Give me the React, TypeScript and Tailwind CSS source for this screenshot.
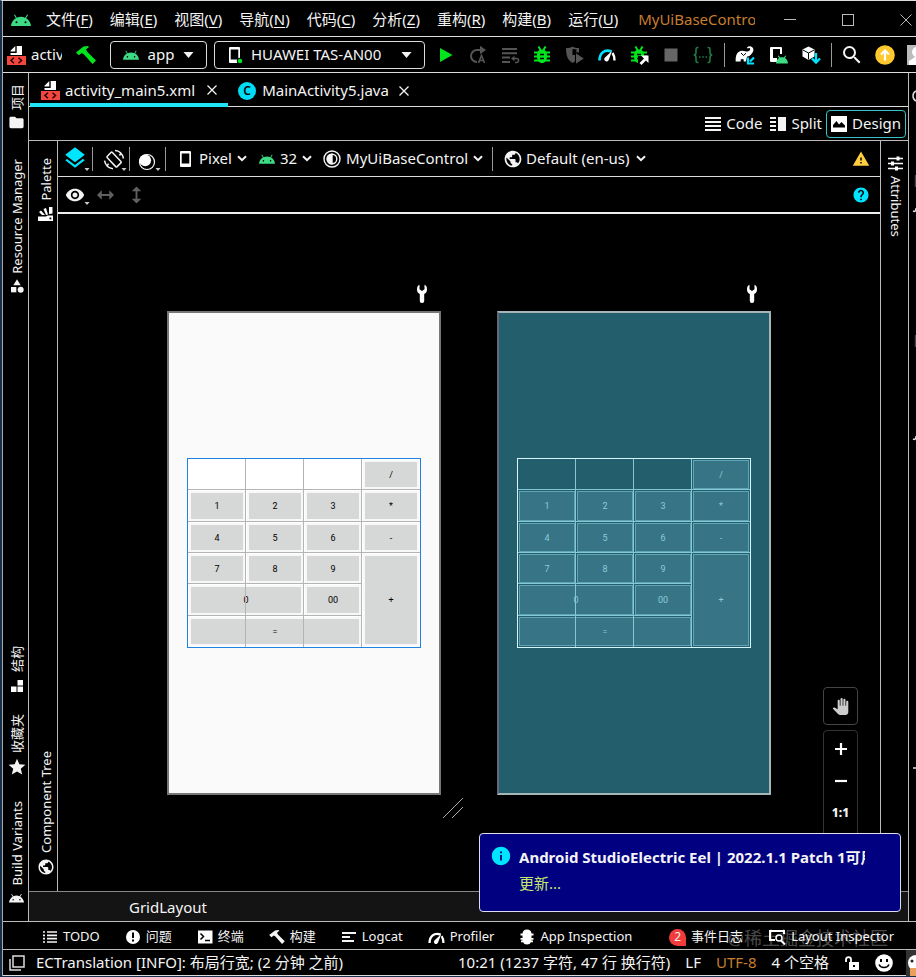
import React from 'react';
import {
  MdCategory,
  MdFolder,
  MdHelp,
  MdInfo,
  MdLayers,
  MdPanTool,
  MdPublic,
  MdSearch,
  MdStar,
  MdVisibility,
  MdWarning,
} from 'react-icons/md';

interface IconProps {
  className?: string;
}

const AndroidHead: React.FC<IconProps> = ({ className }) => (
  <svg viewBox="0 0 20 12" className={className} fill="currentColor" aria-hidden="true">
    <path
      fillRule="evenodd"
      d="M0 12C.3 8.600 2.200 5.700 4.900 4.200L3 1l.9-.5 1.900 3.200a10.500 10.500 0 0 1 8.400 0L16.100.5 17 1l-1.900 3.200C17.800 5.700 19.700 8.600 20 12zM5.500 9.300a1 1 0 1 0 0-2 1 1 0 0 0 0 2zm9 0a1 1 0 1 0 0-2 1 1 0 0 0 0 2z"
    />
  </svg>
);

const XmlFileIcon: React.FC<IconProps> = ({ className }) => (
  <svg viewBox="0 0 20 20" className={className} aria-hidden="true">
    <path d="M8.300 1v5.500H3.500V5.800zM9.700 1H15v9H3.500V8h6.200z" fill="#fff" />
    <path d="M0 11h19v9H0z" fill="#f4453f" />
    <path d="m7 12.800-3 2.700 3 2.700m4.500-5.400 3 2.700-3 2.700" fill="none" stroke="#200" strokeWidth="1.500" />
  </svg>
);

const Hammer: React.FC<IconProps> = ({ className }) => (
  <svg viewBox="0 0 20 18" className={className} fill="currentColor" aria-hidden="true">
    <path d="M0 6.500 7.500.5 12 0l1 1-3 2.500 1.200 2.200L20 14.500 16.500 18 8 8.500 5.800 7 2.800 9.200z" />
  </svg>
);

const PhoneIcon: React.FC<IconProps & { online?: boolean }> = ({ className, online }) => (
  <svg viewBox="0 0 16 18" className={className} aria-hidden="true">
    <path fillRule="evenodd" d="M3 1h9a1 1 0 0 1 1 1v14a1 1 0 0 1-1 1H3a1 1 0 0 1-1-1V2a1 1 0 0 1 1-1zm.700 2.500v10h7.600v-10z" fill="#fff" />
    {online && <circle cx="13" cy="15" r="2.800" fill="#00e51d" stroke="#000" />}
  </svg>
);

const Caret: React.FC<IconProps> = ({ className }) => (
  <svg viewBox="0 0 10 6" className={className} fill="currentColor" aria-hidden="true">
    <path d="M0 0h10L5 6z" />
  </svg>
);

const Chevron = () => (
  <svg viewBox="0 0 10 7" className="h-[7px] w-[10px] shrink-0" fill="none" stroke="currentColor" strokeWidth="2" aria-hidden="true">
    <path d="m1 1.200 4 4 4-4" />
  </svg>
);

const Close = () => (
  <svg viewBox="0 0 10 10" className="size-[10px]" stroke="currentColor" strokeWidth="1.300" aria-hidden="true">
    <path d="m.5.5 9 9m0-9-9 9" />
  </svg>
);

const PlayIcon = () => (
  <svg viewBox="0 0 20 20" className="size-5" aria-hidden="true">
    <path d="M4 3v14l12.500-7z" fill="#00e51d" />
  </svg>
);

const RerunIcon = () => (
  <svg viewBox="0 0 20 20" className="size-5 text-[#555]" fill="none" stroke="currentColor" strokeWidth="2" aria-hidden="true">
    <path d="M9 17a6 6 0 0 1 0-12h4" />
    <path d="M12 .8 18 5l-6 4.200z" fill="currentColor" stroke="none" />
    <path d="m10.500 18 3-7.500 3 7.500m-5-2.500h4" strokeWidth="1.600" />
  </svg>
);

const ApplyChangesIcon = () => (
  <svg viewBox="0 0 20 20" className="size-5 text-[#555]" fill="none" stroke="currentColor" strokeWidth="2" aria-hidden="true">
    <path d="M2 4h15M2 8.300h15M2 12.600h8M2 17h8" />
    <path d="M13 13.500h3.500a2 2 0 0 1 0 4H15" strokeWidth="1.500" />
    <path d="m11 13.500 3.500-2.700v5.400z" fill="currentColor" stroke="none" />
  </svg>
);

const BugIcon: React.FC<{ attach?: boolean }> = ({ attach }) => (
  <svg viewBox="0 0 20 20" className="size-5 text-[#00e51d]" fill="none" stroke="currentColor" strokeWidth="2" aria-hidden="true">
    <path d="M10 4.500c3.500 0 5 2.500 5 6.500 0 4.500-2 7-5 7s-5-2.500-5-7c0-4 1.500-6.500 5-6.500z" fill="currentColor" stroke="none" />
    <path d="M6.500 1.500 8.500 5m5-3.500-2 3.500M2 7.500h16M2 11.500h16M2 15.500h16" />
    <path d="M8 9.500h4M8 13.500h4" stroke="#000" strokeWidth="1.500" />
    {attach && (
      <>
        <path d="M9 11h11v9H9z" fill="#000" stroke="none" />
        <path d="M12 10.500h7.500V18l-2.600-2.600L12.500 20l-2-2 4.500-4.600z" fill="#fff" stroke="none" />
      </>
    )}
  </svg>
);

const CoverageIcon = () => (
  <svg viewBox="0 0 20 20" className="size-5 text-[#555]" aria-hidden="true">
    <path fillRule="evenodd" d="M1 3c3 0 5-.5 6.500-1.500C9 2.500 11 3 14 3v5l-3-2v9L8 18c-4.500-2-7-6-7-15zm6.500 1v6h4V4.500z" fill="currentColor" />
    <path d="M10.500 7.500v12l9-6z" fill="currentColor" stroke="#000" />
  </svg>
);

const GaugeIcon: React.FC<IconProps & { tint?: string }> = ({ className, tint = '#00e5ff' }) => (
  <svg viewBox="0 0 18 14" className={className} fill="none" aria-hidden="true">
    <path d="M1.500 13c0-7 5-12 12-9" stroke={tint} strokeWidth="2.600" />
    <path d="M14.500 5.500c1.300 1.800 2 4.500 2 7.500" stroke="#fff" strokeWidth="2.400" />
    <path d="M14 3.500 7 10a2.300 2.300 0 1 0 3.700 2.500z" fill="#fff" />
  </svg>
);

const StopIcon = () => (
  <svg viewBox="0 0 20 20" className="size-5" aria-hidden="true">
    <path d="M3.500 3.500h13v13h-13z" fill="#666" />
  </svg>
);

const BracesIcon = () => (
  <svg viewBox="0 0 20 20" className="size-5 text-[#1f7a45]" fill="none" stroke="currentColor" strokeWidth="1.600" aria-hidden="true">
    <path d="M5.500 2.500H4.500C3 2.500 3 3.500 3 5v2.500C3 9 2.500 9.800.8 10 2.500 10.200 3 11 3 12.500V15c0 1.500 0 2.500 1.500 2.500h1M14.500 2.500h1C17 2.500 17 3.500 17 5v2.500c0 1.500.5 2.300 2.200 2.500-1.700.2-2.200 1-2.200 2.500V15c0 1.500 0 2.500-1.500 2.500h-1" />
    <path d="M6 12h1.500m1.700 0h1.600m1.700 0H14" />
  </svg>
);

const GradleIcon = () => (
  <svg viewBox="0 0 20 20" className="size-5" aria-hidden="true">
    <path d="M.7 16.500C.3 10 2.500 6 7 5.700c2.500-.2 3.800.9 5.300.8 2-.1 3.700-1.800 2.500-3.200-.6-.7-1.600-.3-2 .3l-1-.8C13 .8 15.800.7 17.300 2.300c2.700 2.900-.1 6.400-2.300 8.200-1 .8-2 1-3 1l-1 5H8.700v-2c-.9-.8-2.100-.8-3 0v2z" fill="#fff" />
    <path d="m6 8 2.500 2.500L11 8.200" fill="none" stroke="#000" />
    <path d="m19 12.500-4 4m-2-4v6h6" fill="none" stroke="#00e5ff" strokeWidth="2.200" />
  </svg>
);

const AvdIcon = () => (
  <svg viewBox="0 0 20 20" className="size-5" aria-hidden="true">
    <path fillRule="evenodd" d="M3 2h10a1 1 0 0 1 1 1v6h-2V4H5v9h4v4H3a1 1 0 0 1-1-1V3a1 1 0 0 1 1-1z" fill="#fff" />
    <path d="M8 18.500c.2-2.500 1.200-4.400 3-5.400L9.800 11l1-.5 1.200 2c1.200-.4 2.800-.4 4 0l1.200-2 1 .5-1.200 2.100c1.700 1 2.800 3 3 5.400z" fill="#3ddc84" />
  </svg>
);

const SdkIcon = () => (
  <svg viewBox="0 0 20 20" className="size-5" aria-hidden="true">
    <path d="M1.500 4.500 7.500 1.500l6 3v7l-6 3.500-6-3.500z" fill="#fff" />
    <path d="m2 5 5.500 3L13 5M7.500 8v6.500" stroke="#000" fill="none" />
    <path d="M15 8v9m-4-3.500 4 4 4-4" stroke="#00e5ff" strokeWidth="2.300" fill="none" />
  </svg>
);

const UpdateIcon = () => (
  <svg viewBox="0 0 20 20" className="size-5" aria-hidden="true">
    <circle cx="10" cy="10" r="9.800" fill="#ffc92e" />
    <path d="M10 15.500V6.500M6 9.500l4-4 4 4" stroke="#fff" strokeWidth="2.200" fill="none" />
  </svg>
);

const RotateIcon = () => (
  <svg viewBox="0 0 22 22" className="size-[22px]" fill="none" stroke="currentColor" strokeWidth="1.500" aria-hidden="true">
    <path d="M4.300 7.200 8 3.500a1 1 0 0 1 1.400 0l8.500 9a1 1 0 0 1 0 1.400l-3.800 3.700a1 1 0 0 1-1.400 0L4.300 8.700a1 1 0 0 1 0-1.500z" />
    <path d="M12 1.500c4.500.3 7.500 3.500 8.500 8M18 4l-1.500 2.500M10 19.700c-4.500-.3-7.500-3.500-8.500-8M4 17.200l1.500-2.500" />
  </svg>
);

const MoonIcon = () => (
  <svg viewBox="0 0 18 18" className="size-[18px]" aria-hidden="true">
    <circle cx="9" cy="9" r="7.500" fill="none" stroke="#fff" strokeWidth="1.200" />
    <circle cx="7.200" cy="7.300" r="5.900" fill="#fff" />
  </svg>
);

const ThemeIcon = () => (
  <svg viewBox="0 0 18 18" className="size-[18px] shrink-0" fill="none" stroke="currentColor" strokeWidth="1.400" aria-hidden="true">
    <circle cx="9" cy="9" r="8" />
    <circle cx="9" cy="9" r="4.800" />
    <path d="M9 4.200a4.800 4.800 0 0 0 0 9.600z" fill="currentColor" />
  </svg>
);

const PanArrow: React.FC<IconProps> = ({ className }) => (
  <svg viewBox="0 0 18 10" className={className} fill="#606060" aria-hidden="true">
    <path d="M0 5 5 0v4h8V0l5 5-5 5V6H5v4z" />
  </svg>
);

const PaletteIcon = () => (
  <svg viewBox="0 0 16 14" className="h-[14px] w-4" fill="#fff" aria-hidden="true">
    <path d="M0 9.500h8l1.500-1L15 8.500V14H0zM1 5l2-1.500 4 4.500H4zM5.500 2 8 1l2 6.500-2 .5zM11 0h3.500v6.500L11 7z" />
    <path d="M11.500 10.500h1.800v1.800h-1.800z" fill="#000" />
  </svg>
);

const WrenchIcon = () => (
  <svg viewBox="0 0 12 19" className="h-[19px] w-3" fill="#fff" aria-hidden="true">
    <path d="M3.500.8v4.500L6 7l2.500-1.700V.8C10.500 1.500 11 3.500 11 5.500c0 2.300-1 3.700-2.800 4.500V17a2 2 0 0 1-2 2h-.4a2 2 0 0 1-2-2v-7C2 9.200 1 7.800 1 5.500c0-2 .5-4 2.500-4.700z" />
  </svg>
);

const TuneIcon = () => (
  <svg viewBox="0 0 15 15" className="size-[15px]" stroke="#fff" strokeWidth="1.500" aria-hidden="true">
    <path d="M0 2.500h15M0 7.500h15M0 12.500h15" />
    <path d="M10 .5v4M4.500 5.500v4m4 1v4" strokeWidth="3" />
  </svg>
);

const StructureIcon = () => (
  <svg viewBox="0 0 12 12" className="size-3" fill="#fff" aria-hidden="true">
    <path d="M6.500 0H12v5.500H6.500zM0 6.500h5.500V12H0zM6.500 6.500H12V12H6.500z" />
  </svg>
);

const ListIcon = () => (
  <svg viewBox="0 0 16 16" className="size-4" stroke="currentColor" strokeWidth="1.700" aria-hidden="true">
    <path d="M1 3h2M5 3h10M1 6.300h2m2 0h10M1 9.600h2m2 0h10M1 13h2m2 0h10" />
  </svg>
);

const ProblemIcon = () => (
  <svg viewBox="0 0 16 16" className="size-4" aria-hidden="true">
    <circle cx="8" cy="8" r="7" fill="#fff" />
    <path d="M7 3.500h2V9H7zm0 7h2v2H7z" fill="#000" />
  </svg>
);

const TerminalIcon = () => (
  <svg viewBox="0 0 16 16" className="size-4" fill="none" stroke="#000" strokeWidth="1.500" aria-hidden="true">
    <path d="M1 1.500h14.500v13H1z" fill="#fff" stroke="none" />
    <path d="m3.500 4.500 3 3-3 3M8 11.500h5" />
  </svg>
);

const LogcatIcon = () => (
  <svg viewBox="0 0 16 16" className="size-4" stroke="currentColor" strokeWidth="2" aria-hidden="true">
    <path d="M1 4h14M1 8h8M1 12h12" />
  </svg>
);

const InspectionIcon = () => (
  <svg viewBox="0 0 16 16" className="size-4" fill="#fff" aria-hidden="true">
    <path d="M3.500 5c0-3 1.500-4.500 4.500-4.500s4.500 1.500 4.500 4.500zM1.500 4.500h13v2h-13zM3.500 6.500h9V9h2v1.700h-2v.8h1.500v1.700h-2.200c-.5 1.300-1.900 2.300-3.800 2.300s-3.300-1-3.800-2.300H2v-1.700h1.500v-.8h-2V9h2z" />
  </svg>
);

const LayoutInspectorIcon = () => (
  <svg viewBox="0 0 18 16" className="h-4 w-[18px]" fill="none" stroke="#fff" strokeWidth="2" aria-hidden="true">
    <path d="M7 11H2V2h14v3" />
    <circle cx="11" cy="9" r="3" strokeWidth="1.500" />
    <path d="m13 11.500 4 4" />
  </svg>
);

const UnlockIcon = () => (
  <svg viewBox="0 0 16 16" className="size-4" aria-hidden="true">
    <path d="M5 7h10v8H5z" fill="#fff" />
    <path d="M2 7V4.500C2 1.300 7 1.300 7 4.500V8" fill="none" stroke="#fff" strokeWidth="1.800" />
    <path d="M9 10h2v2H9z" fill="#000" />
  </svg>
);

const SmileIcon = () => (
  <svg viewBox="0 0 18 18" className="size-[18px]" aria-hidden="true">
    <circle cx="9" cy="9" r="8.800" fill="#fff" />
    <path d="M5 5h2v3H5zm6 0h2v3h-2z" fill="#000" />
    <path d="M4 10.500c1.500 4 8.500 4 10 0" fill="none" stroke="#000" strokeWidth="1.500" />
  </svg>
);

const CodeIcon = () => (
  <svg viewBox="0 0 16 14" className="h-[14px] w-4" stroke="currentColor" strokeWidth="2" aria-hidden="true">
    <path d="M0 1h16M0 5h16M0 9h16M0 13h16" />
  </svg>
);

const SplitIcon = () => (
  <svg viewBox="0 0 16 14" className="h-[14px] w-4" stroke="currentColor" strokeWidth="2" aria-hidden="true">
    <path d="M0 1h6M0 5h6M0 9h6M0 13h6" />
    <path d="M8 0h8v14H8z" fill="currentColor" stroke="none" />
  </svg>
);

const DesignIcon = () => (
  <svg viewBox="0 0 16 16" className="size-4" aria-hidden="true">
    <path d="M0 0h16v16H0z" fill="#fff" />
    <path d="M2 11.500V9l3.500-4 2.500 3.500L10.500 6 14 9.500v2z" fill="#000" />
  </svg>
);

const menus = [
  ['文件', 'F'],
  ['编辑', 'E'],
  ['视图', 'V'],
  ['导航', 'N'],
  ['代码', 'C'],
  ['分析', 'Z'],
  ['重构', 'R'],
  ['构建', 'B'],
  ['运行', 'U'],
];

const MenuBar = () => (
  <header className="flex h-9 items-center border-b border-[#ddd] pt-[2px] pl-2 text-[15px]">
    <AndroidHead className="h-3 w-5 shrink-0 text-[#3ddc84]" />
    <nav className="ml-[15px] flex gap-[17px]">
      {menus.map(([label, key]) => (
        <button key={key} className="whitespace-nowrap">
          {label}(<span className="underline underline-offset-2">{key}</span>)
        </button>
      ))}
    </nav>
    <div className="ml-5 w-[117px] overflow-hidden whitespace-nowrap text-[#c87d2f]">MyUiBaseControl</div>
    <div className="mr-1 ml-auto flex shrink-0 items-center gap-[46px] text-[#bbb]">
      <button aria-label="Minimize" className="w-3 border-t border-current" />
      <button aria-label="Maximize" className="size-3 border border-current" />
      <button aria-label="Close">
        <svg viewBox="0 0 12 12" className="size-3" stroke="currentColor">
          <path d="m.5.5 11 11m0-11-11 11" />
        </svg>
      </button>
    </div>
  </header>
);

const runActions = [
  { label: 'Run', icon: <PlayIcon /> },
  { label: 'Apply changes and restart', icon: <RerunIcon /> },
  { label: 'Apply code changes', icon: <ApplyChangesIcon /> },
  { label: 'Debug', icon: <BugIcon /> },
  { label: 'Coverage', icon: <CoverageIcon /> },
  { label: 'Profile', icon: <GaugeIcon className="h-[15px] w-[18px]" /> },
  { label: 'Attach debugger', icon: <BugIcon attach /> },
  { label: 'Stop', icon: <StopIcon /> },
  { label: 'Format', icon: <BracesIcon /> },
];

const RunToolbar = () => (
  <div className="flex h-9 items-center border-b border-[#ddd] pl-1 text-[15px]">
    <XmlFileIcon className="size-5 shrink-0" />
    <span className="ml-1 w-[31px] shrink-0 overflow-hidden">activity</span>
    <button aria-label="Build" className="ml-[14px] shrink-0">
      <Hammer className="h-[18px] w-5 text-[#00e51d]" />
    </button>
    <div className="ml-[14px] flex h-7 w-[97px] shrink-0 items-center justify-between rounded border border-[#ddd] px-3">
      <AndroidHead className="h-[10px] w-4 text-[#3ddc84]" />
      <select aria-label="Run configuration" className="appearance-none">
        <option>app</option>
      </select>
      <Caret className="h-[6px] w-[11px]" />
    </div>
    <div className="ml-[7px] flex h-7 w-[211px] shrink-0 items-center rounded border border-[#ddd] px-3">
      <PhoneIcon online className="mr-2 h-[18px] w-4 shrink-0" />
      <select aria-label="Device" className="appearance-none">
        <option>HUAWEI TAS-AN00</option>
      </select>
      <Caret className="ml-auto h-[6px] w-[11px]" />
    </div>
    <div className="mx-[11px] flex flex-1 items-center justify-between">
      {runActions.map((action) => (
        <button key={action.label} aria-label={action.label} className="flex w-5 shrink-0 justify-center">
          {action.icon}
        </button>
      ))}
    </div>
    <div className="flex h-6 shrink-0 items-center gap-[13px] border-x border-[#999] px-[10px]">
      <button aria-label="Sync project"><GradleIcon /></button>
      <button aria-label="Device manager"><AvdIcon /></button>
      <button aria-label="SDK manager"><SdkIcon /></button>
    </div>
    <button aria-label="Search" className="ml-2 shrink-0"><MdSearch className="size-6" /></button>
    <button aria-label="Update" className="ml-[11px] shrink-0"><UpdateIcon /></button>
    <button aria-label="Account" className="ml-3 h-5 w-[9px] shrink-0 overflow-hidden bg-[#bbb]">
      <svg viewBox="0 0 9 20" className="h-5 w-[9px]" fill="#fff">
        <circle cx="10" cy="7" r="5" />
        <path d="M2 20v-4l6-4h1v8z" />
      </svg>
    </button>
  </div>
);

interface StripeProps {
  label: string;
  icon: React.ReactNode;
  className?: string;
}

/* Button of a left-hand tool stripe, read from bottom to top */
const StripeButton: React.FC<StripeProps> = ({ label, icon, className = 'gap-1' }) => (
  <button className={`flex flex-col items-center text-[13px] leading-5 ${className}`}>
    <span className="rotate-180 whitespace-nowrap [text-orientation:sideways] [writing-mode:vertical-rl]">{label}</span>
    {icon}
  </button>
);

const EditorTabs = () => (
  <div role="tablist" className="flex h-[34px] border-b border-[#ddd] text-[15px]">
    <div role="tab" aria-selected="true" className="-mb-px ml-px flex items-center gap-1 border-b-4 border-[#1fe4f5] px-[11px] pt-1">
      <XmlFileIcon className="size-5" />
      <button>activity_main5.xml</button>
      <button aria-label="Close activity_main5.xml" className="ml-2"><Close /></button>
    </div>
    <div role="tab" aria-selected="false" className="flex items-center gap-[6px] px-[10px] pt-[2px]">
      <span className="flex size-[18px] items-center justify-center rounded-full bg-[#00dcf5] text-xs font-semibold text-black">C</span>
      <button>MainActivity5.java</button>
      <button aria-label="Close MainActivity5.java" className="ml-1"><Close /></button>
    </div>
  </div>
);

const ViewModes = () => (
  <div className="flex h-[34px] items-center justify-end border-b border-[#bbb] pr-[2px] text-[15px]">
    <button className="flex items-center gap-[5px]"><CodeIcon />Code</button>
    <button className="ml-2 flex items-center gap-[5px]"><SplitIcon />Split</button>
    <button aria-pressed="true" className="ml-1 flex h-7 items-center gap-[5px] rounded border border-[#35c5c9] px-1">
      <DesignIcon />Design
    </button>
  </div>
);

const SurfaceToolbar = () => (
  <div className="flex h-9 items-center border-b border-[#ddd] pl-1 text-[15px]">
    <button aria-label="Design surface" className="flex h-6 w-[31px] items-end border-r border-[#999]">
      <MdLayers className="size-[26px] shrink-0 text-[#00e5ff]" />
      <Caret className="-ml-1 h-[3px] w-[6px] shrink-0 text-[#ccc]" />
    </button>
    <button aria-label="Orientation" className="flex h-6 w-[37px] items-end justify-center border-r border-[#999] pl-2">
      <RotateIcon />
      <Caret className="-ml-1 h-[3px] w-[6px] text-[#ccc]" />
    </button>
    <button aria-label="Night mode" className="flex h-6 w-9 items-end justify-center border-r border-[#999] pl-1">
      <MoonIcon />
      <Caret className="-ml-px h-[3px] w-[6px] text-[#ccc]" />
    </button>
    <button className="ml-3 flex items-center gap-[5px]"><PhoneIcon className="h-[18px] w-4" />Pixel<Chevron /></button>
    <button className="ml-3 flex items-center gap-[5px]"><AndroidHead className="h-[10px] w-4 text-[#3ddc84]" />32<Chevron /></button>
    <button className="ml-[11px] flex items-center gap-[5px]"><ThemeIcon />MyUiBaseControl<Chevron /></button>
    <div className="mr-[10px] ml-[9px] h-6 w-px bg-[#999]" />
    <button className="flex items-center gap-[3px]"><MdPublic className="size-5" />Default (en-us)<span className="ml-[3px]"><Chevron /></span></button>
    <button aria-label="Warnings" className="mr-[10px] ml-auto"><MdWarning className="size-[18px] text-[#ffcf40]" /></button>
  </div>
);

const ViewToolbar = () => (
  <div className="flex h-[37px] items-center border-b-2 border-[#eee] pl-[7px]">
    <button aria-label="View options" className="flex items-end">
      <MdVisibility className="size-5" />
      <Caret className="-ml-px h-[3px] w-[6px] text-[#ccc]" />
    </button>
    <PanArrow className="ml-[7px] h-[10px] w-[17px]" />
    <PanArrow className="ml-[14px] h-[10px] w-[17px] rotate-90" />
    <button aria-label="Help" className="mr-[10px] ml-auto"><MdHelp className="size-[18px] text-[#00e5ff]" /></button>
  </div>
);

interface Key {
  text: string;
  place: string;
}

const keys: Key[] = [
  { text: '/', place: 'col-start-4' },
  { text: '1', place: 'row-start-2' },
  { text: '2', place: 'row-start-2' },
  { text: '3', place: 'row-start-2' },
  { text: '*', place: 'row-start-2' },
  { text: '4', place: 'row-start-3' },
  { text: '5', place: 'row-start-3' },
  { text: '6', place: 'row-start-3' },
  { text: '-', place: 'row-start-3' },
  { text: '7', place: 'row-start-4' },
  { text: '8', place: 'row-start-4' },
  { text: '9', place: 'row-start-4' },
  { text: '+', place: 'col-start-4 row-start-4 row-span-3' },
  { text: '0', place: 'row-start-5 col-span-2' },
  { text: '00', place: 'row-start-5' },
  { text: '=', place: 'row-start-6 col-span-3' },
];

const Calculator: React.FC<{ blueprint?: boolean }> = ({ blueprint }) => {
  const frame = blueprint ? 'border-[#d5f6fa]' : 'border-[#1e82e0] bg-white';
  const key = blueprint
    ? 'border border-[#5fa5b5] bg-[#377586] text-[#8ccbd8]'
    : 'border-2 border-[#f8f8f8] bg-[#d6d7d7] text-black';
  const guide = blueprint ? 'border-[#84c8d6]' : 'border-[#b4b4b4]';
  return (
    <div className={`relative h-[190px] border ${frame}`}>
      <div className="grid h-full grid-cols-4 grid-rows-6 font-['Roboto',sans-serif] text-[9px]">
        {keys.map(({ text, place }) => (
          <button key={text} className={`m-px flex items-center justify-center pt-[2px] ${key} ${place}`}>{text}</button>
        ))}
      </div>
      <div className="pointer-events-none absolute inset-0 grid grid-cols-4 grid-rows-6">
        {Array.from({ length: 24 }, (_, i) => {
          const right = i % 4 < 3 ? 'border-r' : '';
          const bottom = i < 20 && i !== 15 && i !== 19 ? 'border-b' : '';
          return <span key={i} className={`${guide} ${right} ${bottom}`} />;
        })}
      </div>
    </div>
  );
};

const Preview: React.FC<{ blueprint?: boolean }> = ({ blueprint }) => (
  <div className="flex w-[274px] flex-col gap-2">
    <button aria-label="Preview warnings" className="mr-[13px] self-end"><WrenchIcon /></button>
    <div
      className={`flex h-[484px] flex-col justify-center border-2 px-[18px] ${
        blueprint ? 'border-[#a5b5b8] border-l-[#667] bg-[#235e6c]' : 'border-[#777] bg-[#fafafa]'
      }`}
    >
      <Calculator blueprint={blueprint} />
    </div>
  </div>
);

const Canvas = () => (
  <main className="relative flex-1">
    <div className="flex justify-center gap-14 pt-[70px]">
      <Preview />
      <Preview blueprint />
    </div>
    <svg viewBox="0 0 22 22" className="absolute top-[583px] left-[384px] size-[22px]" stroke="#aaa" aria-hidden="true">
      <path d="M1 21 21 1M10 21 21 10" />
    </svg>
    <div className="absolute right-[22px] bottom-0 flex flex-col gap-[5px]">
      <button aria-label="Pan" className="flex h-[38px] w-[35px] items-center justify-center rounded border border-[#444]">
        <MdPanTool className="size-[17px] text-[#ccc]" />
      </button>
      <div className="flex h-[161px] flex-col items-center rounded border border-[#333] pt-[2px]">
        <button aria-label="Zoom in" className="flex size-8 items-center justify-center">
          <svg viewBox="0 0 12 12" className="size-3" stroke="#fff" strokeWidth="2.200"><path d="M0 6h12M6 0v12" /></svg>
        </button>
        <button aria-label="Zoom out" className="flex size-8 items-center justify-center">
          <svg viewBox="0 0 12 12" className="size-3" stroke="#fff" strokeWidth="2.200"><path d="M0 6h12" /></svg>
        </button>
        <button className="h-8 text-xs font-extrabold">1:1</button>
      </div>
    </div>
  </main>
);

const Notification = () => (
  <aside className="absolute right-[15px] bottom-[64px] flex h-[79px] w-[422px] gap-[7px] rounded-sm border border-[#dde] bg-[#000080] pt-[10px] pl-[10px] text-[15px] leading-[26px]">
    <MdInfo className="mt-px size-[22px] shrink-0 text-[#00e5ff]" />
    <div className="w-[346px] overflow-hidden whitespace-nowrap">
      <p className="font-bold">Android StudioElectric Eel | 2022.1.1 Patch 1可用</p>
      <a href="#update" className="text-[#c5e86c]">更新...</a>
    </div>
  </aside>
);

const toolWindows = [
  { label: 'TODO', icon: <ListIcon /> },
  { label: '问题', icon: <ProblemIcon /> },
  { label: '终端', icon: <TerminalIcon /> },
  { label: '构建', icon: <Hammer className="h-[14px] w-4" /> },
  { label: 'Logcat', icon: <LogcatIcon /> },
  { label: 'Profiler', icon: <GaugeIcon tint="#fff" className="h-[13px] w-[17px]" /> },
  { label: 'App Inspection', icon: <InspectionIcon /> },
];

const ToolWindowBar = () => (
  <div className="relative flex h-7 items-center gap-[25px] border-b border-[#bbb] pt-[3px] pr-[22px] pl-[39px] text-[13px] whitespace-nowrap">
    {toolWindows.map(({ label, icon }) => (
      <button key={label} className="flex items-center gap-[5px]">{icon}{label}</button>
    ))}
    <button className="ml-auto flex items-center gap-[5px]">
      <span className="flex size-[17px] items-center justify-center rounded-full rounded-br-none bg-[#f23b3b] text-xs">2</span>
      事件日志
    </button>
    <button className="flex items-center gap-[5px]"><LayoutInspectorIcon />Layout Inspector</button>
    <span className="pointer-events-none absolute top-0 right-[28px] text-[18px] leading-8 text-white/30">@稀土掘金技术社区</span>
  </div>
);

const StatusBar = () => (
  <footer className="flex h-[26px] items-center gap-[15px] border-b border-[#ddd] pl-[6px] text-[15px] whitespace-nowrap">
    <button aria-label="Tool windows">
      <svg viewBox="0 0 16 16" className="size-4" fill="none" stroke="#ddd" strokeWidth="1.500">
        <path d="M4 1h11v11H4zM1 4v11h11" />
      </svg>
    </button>
    <span className="-ml-1">ECTranslation [INFO]: 布局行宽; (2 分钟 之前)</span>
    <span className="ml-auto">10:21 (1237 字符, 47 行 换行符)</span>
    <button>LF</button>
    <button className="text-[#c87d2f]">UTF-8</button>
    <button>4 个空格</button>
    <button aria-label="Unlocked"><UnlockIcon /></button>
    <button aria-label="Feedback"><SmileIcon /></button>
    <svg viewBox="0 0 10 26" className="-ml-[2px] h-[26px] w-[10px]" aria-hidden="true">
      <path d="M0 0h10v26H0z" fill="#333" />
      <path d="M10 5a8 8 0 0 0 0 16z" fill="#fff" />
      <path d="M4 18h6v8H4z" fill="#e8a05c" />
      <circle cx="6" cy="11" r="1.500" fill="#222" />
    </svg>
  </footer>
);

/* Edge of the panel docked on the right, almost fully off screen */
const DockedPanelEdge = () => (
  <div className="w-2 shrink-0 border-l border-[#bbb]">
    <svg viewBox="0 0 7 700" className="h-[700px] w-[7px]" fill="none" stroke="#ddd" strokeWidth="1.500" aria-hidden="true">
      <path d="M7 18c-2 1-3 3-3 5s1 4 3 5M4 138c2 1 3 0 3-3M4 366c2 1 3 0 3-3M4 695h3" />
      <path d="M6.500 102v12M6.500 262v12" stroke="#444" />
    </svg>
  </div>
);

export default function App() {
  return (
    <div className="relative flex min-h-screen flex-col overflow-hidden border-t border-b border-l-2 border-t-[#ddd] border-b-[#14304d] border-l-[#14304d] bg-black pl-px font-['Noto_Sans','Noto_Sans_CJK_SC',sans-serif] text-[#f4f4f4] shadow-[inset_1px_0_#aaa]">
      <MenuBar />
      <RunToolbar />
      <div className="flex flex-1 border-b border-[#bbb]">
        <div className="flex w-[26px] shrink-0 flex-col items-center border-r border-[#bbb] pt-[11px] pb-[18px] pl-[2px]">
          <StripeButton label="项目" icon={<MdFolder className="size-[17px]" />} />
          <StripeButton label="Resource Manager" icon={<MdCategory className="size-4" />} className="mt-7 gap-1" />
          <StripeButton label="结构" icon={<StructureIcon />} className="mt-auto gap-2" />
          <StripeButton label="收藏夹" icon={<MdStar className="size-5" />} className="mt-[22px] gap-1" />
          <StripeButton label="Build Variants" icon={<AndroidHead className="h-[10px] w-[15px]" />} className="mt-6 gap-2" />
        </div>
        <div className="flex min-w-0 flex-1 flex-col">
          <EditorTabs />
          <ViewModes />
          <div className="flex flex-1">
            <div className="flex w-[29px] shrink-0 flex-col items-center justify-between border-r border-[#bbb] pt-[17px] pb-[15px] pl-[6px]">
              <StripeButton label="Palette" icon={<PaletteIcon />} className="gap-[6px]" />
              <StripeButton label="Component Tree" icon={<MdPublic className="size-[18px]" />} className="gap-[5px]" />
            </div>
            <div className="flex min-w-0 flex-1 flex-col">
              <SurfaceToolbar />
              <ViewToolbar />
              <Canvas />
            </div>
            <div className="flex w-7 shrink-0 flex-col items-center border-l border-[#bbb] pt-[15px] pl-[2px]">
              <button className="flex flex-col items-center gap-[5px] text-[13px] leading-5">
                <TuneIcon />
                <span className="[writing-mode:vertical-rl]">Attributes</span>
              </button>
            </div>
          </div>
          <div className="flex h-[30px] items-center border-t border-[#888] bg-[#141414] pt-[2px] pl-[100px] text-[15px]">
            <button>GridLayout</button>
          </div>
        </div>
        <DockedPanelEdge />
      </div>
      <ToolWindowBar />
      <StatusBar />
      <Notification />
    </div>
  );
}
